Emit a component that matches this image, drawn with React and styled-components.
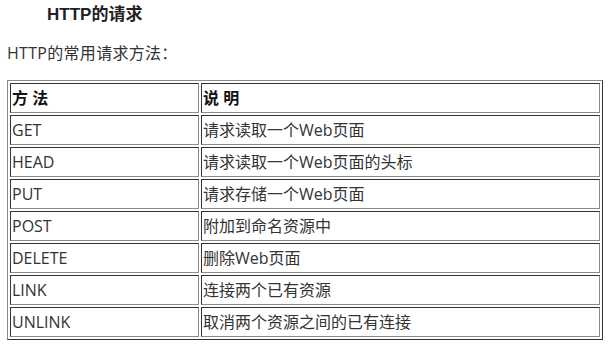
import React from 'react'
import styled, { createGlobalStyle } from 'styled-components'

const GlobalStyle = createGlobalStyle`
  html, body {
    margin: 0;
    background: #fff;
  }
  body {
    font-family: "Open Sans", "Noto Sans CJK SC", sans-serif;
    color: #333;
  }
`

const Page = styled.div`
  padding: 0 7px;
`

const Title = styled.h3`
  margin: 0;
  padding: 5px 0 0 40px;
  height: 27px;
  font-family: "Liberation Sans", "Noto Sans CJK SC", sans-serif;
  font-size: 17px;
  font-weight: bold;
  line-height: 20px;
  color: #222;
`

const Intro = styled.p`
  margin: 0;
  height: 48px;
  padding-top: 11px;
  box-sizing: border-box;
  font-size: 16px;
  line-height: 20px;
  letter-spacing: 0.3px;
`

const Table = styled.table`
  width: 596px;
  border-collapse: separate;
  border-spacing: 2px;
  border: 1px solid;
  border-color: #8a8a8a #333 #333 #8a8a8a;
`

const Cell = styled.td`
  box-sizing: border-box;
  height: 30px;
  width: ${({ $w }) => $w}px;
  padding: 0 1px;
  border: 1px solid;
  border-color: #333 #8a8a8a #8a8a8a #333;
  font-size: 16px;
  line-height: 20px;
  font-weight: ${({ $head }) => ($head ? 'bold' : 'normal')};
  color: ${({ $head }) => ($head ? '#111' : '#333')};
  vertical-align: middle;
  white-space: nowrap;
`

const rows = [
  ['GET', '请求读取一个Web页面'],
  ['HEAD', '请求读取一个Web页面的头标'],
  ['PUT', '请求存储一个Web页面'],
  ['POST', '附加到命名资源中'],
  ['DELETE', '删除Web页面'],
  ['LINK', '连接两个已有资源'],
  ['UNLINK', '取消两个资源之间的已有连接'],
]

const App = () => (
  <Page>
    <GlobalStyle />
    <Title>HTTP的请求</Title>
    <Intro>HTTP的常用请求方法：</Intro>
    <Table>
      <tbody>
        <tr>
          <Cell $head $w={189}>方 法</Cell>
          <Cell $head $w={399}>说 明</Cell>
        </tr>
        {rows.map(([method, desc]) => (
          <tr key={method}>
            <Cell $w={189}>{method}</Cell>
            <Cell $w={399}>{desc}</Cell>
          </tr>
        ))}
      </tbody>
    </Table>
  </Page>
)

export default App
